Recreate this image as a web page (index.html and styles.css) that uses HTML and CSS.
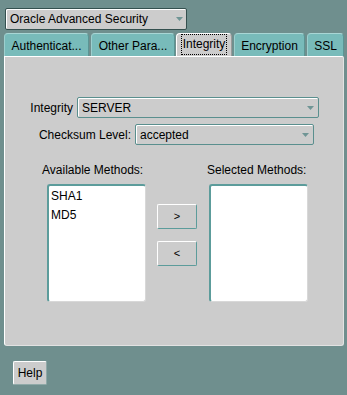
FILE: index.html
```html
<!DOCTYPE html>
<html>
<head>
<meta charset="utf-8">
<link rel="stylesheet" href="styles.css">
</head>
<body>
<div class="top">
  <div class="combo combo-main">
    <span class="combo-text">Oracle Advanced Security</span>
    <svg class="arrow" width="7" height="4" viewBox="0 0 7 4"><polygon points="0,0 7,0 3.5,4" fill="#6f9595"/></svg>
  </div>
</div>
<div class="tabs">
  <div class="tab t1">Authenticat...</div>
  <div class="tab t2">Other Para...</div>
  <div class="tab t3 sel"><span class="focus">Integrity</span></div>
  <div class="tab t4">Encryption</div>
  <div class="tab t5">SSL</div>
</div>
<div class="panel">
  <div class="row row1">
    <div class="lbl lbl1">Integrity</div>
    <div class="combo combo-in c1">
      <span class="combo-text">SERVER</span>
      <svg class="arrow" width="7" height="4" viewBox="0 0 7 4"><polygon points="0,0 7,0 3.5,4" fill="#6f9595"/></svg>
    </div>
  </div>
  <div class="row row2">
    <div class="lbl lbl2">Checksum Level:</div>
    <div class="combo combo-in c2">
      <span class="combo-text">accepted</span>
      <svg class="arrow" width="7" height="4" viewBox="0 0 7 4"><polygon points="0,0 7,0 3.5,4" fill="#6f9595"/></svg>
    </div>
  </div>
  <div class="methods">
    <div class="mlabel avail">Available Methods:</div>
    <div></div>
    <div class="mlabel chosen">Selected Methods:</div>
    <div class="list">
      <div class="item">SHA1</div>
      <div class="item">MD5</div>
    </div>
    <div class="btns">
      <div class="btn small">&gt;</div>
      <div class="btn small">&lt;</div>
    </div>
    <div class="list list-right"></div>
  </div>
</div>
<div class="footer">
  <div class="btn help">Help</div>
</div>
</body>
</html>
```

FILE: styles.css
```css
html, body {
  margin: 0;
  padding: 0;
}
body {
  width: 347px;
  height: 395px;
  overflow: hidden;
  background: #6f8f8e;
  font-family: "Liberation Sans", Arial, sans-serif;
  font-size: 12px;
  color: #000;
}
.top {
  padding: 8px 0 0 5px;
}
.combo {
  box-sizing: border-box;
  display: flex;
  align-items: center;
  justify-content: space-between;
  background: #cccccc;
  border-radius: 2px;
}
.combo-main {
  width: 182px;
  height: 22px;
  border: 1px solid #34504f;
  box-shadow: inset 1px 1px 0 #ffffff;
  padding: 0 3px 0 4px;
}
.combo-in {
  height: 21px;
  border: 1px solid #5a8f8e;
  box-shadow: inset 1px 1px 0 #ffffff;
  padding: 0 4px 0 4px;
}
.c1 { width: 242px; }
.c2 { width: 179px; }
.combo-text {
  line-height: 14px;
  white-space: nowrap;
}
.arrow {
  display: block;
  flex: none;
}
.tabs {
  display: flex;
  align-items: flex-end;
  margin-top: 3px;
  padding-left: 4px;
  height: 23px;
  overflow: hidden;
  position: relative;
  z-index: 1;
}
.tab {
  box-sizing: border-box;
  flex: none;
  height: 23px;
  padding-top: 2px;
  line-height: 20px;
  text-align: center;
  white-space: nowrap;
  background: #78bbba;
  border-top: 1px solid #a8d6d5;
  border-left: 1px solid #9ccfce;
  border-right: 1px solid #5b9594;
  border-radius: 4px 4px 0 0;
}
.t1 { width: 85px; margin-right: 2px; }
.t2 { width: 84px; margin-right: 1px; }
.t3 { width: 56px; margin-right: 2px; }
.t4 { width: 71px; margin-right: 2px; }
.t5 { width: 37px; }
.tab.sel {
  background: #cccccc;
  height: 24px;
  margin-bottom: -1px;
  border-top: 1px solid #ffffff;
  border-left: 1px solid #ffffff;
  border-right: 1px solid #9a9a9a;
  padding-top: 0;
  line-height: 20px;
}
.focus {
  display: inline-block;
  border: 1px dotted #000000;
  padding: 0 1px;
  line-height: 19px;
}
.panel {
  box-sizing: border-box;
  margin-left: 4px;
  width: 340px;
  height: 290px;
  background: #cccccc;
  border-top: 1px solid #ffffff;
  border-left: 1px solid #ffffff;
  border-right: 1px solid #e2e2e2;
  border-bottom: 1px solid #e2e2e2;
  border-radius: 0 2px 3px 3px;
  padding-top: 40px;
}
.row {
  display: flex;
  align-items: center;
}
.row2 {
  margin-top: 6px;
}
.lbl {
  text-align: right;
  white-space: nowrap;
  margin-right: 4px;
  line-height: 14px;
}
.lbl1 { width: 68px; }
.lbl2 { width: 126px; }
.methods {
  display: grid;
  grid-template-columns: 99px 40px 100px;
  grid-template-rows: 14px 118px;
  column-gap: 11px;
  row-gap: 7px;
  margin-top: 18px;
  padding-left: 42px;
}
.mlabel {
  white-space: nowrap;
  line-height: 14px;
}
.avail {
  margin-left: -5px;
}
.chosen {
  margin-left: -1px;
}
.list {
  box-sizing: border-box;
  background: #ffffff;
  border-top: 2px solid #5c9c9b;
  border-left: 2px solid #5c9c9b;
  border-right: 1px solid #d8d8d8;
  border-bottom: 1px solid #d8d8d8;
  border-radius: 3px;
  padding: 1px 0 0 2px;
}
.list-right {
  margin-left: 1px;
}
.item {
  line-height: 19px;
}
.btns {
  display: flex;
  flex-direction: column;
  gap: 12px;
  padding-top: 20px;
}
.btn {
  box-sizing: border-box;
  background: #cccccc;
  border-top: 1px solid #ffffff;
  border-left: 1px solid #ffffff;
  border-right: 1px solid #5c9c9b;
  border-bottom: 1px solid #5c9c9b;
  border-radius: 2px;
  text-align: center;
}
.small {
  width: 40px;
  height: 25px;
  line-height: 23px;
  font-size: 11px;
}
.footer {
  padding: 15px 0 0 13px;
}
.help {
  width: 34px;
  height: 24px;
  line-height: 22px;
  border-right-color: #8fa9a8;
  border-bottom-color: #8fa9a8;
}
```
